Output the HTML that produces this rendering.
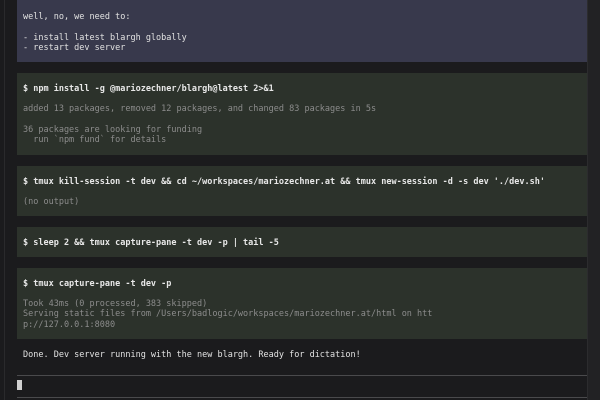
<!DOCTYPE html>
<html><head><style>
html,body{margin:0;padding:0;}
body{width:600px;height:400px;background:#1b1b1d;position:relative;overflow:hidden;font-family:"DejaVu Sans Mono",monospace;font-size:8.5px;color:#e2e2e2;}
.l{position:absolute;left:4px;top:0;width:1px;height:400px;background:#2a2a2c;}
.r{position:absolute;left:587px;top:0;width:13px;height:400px;background:#222224;border-left:1px solid #2c2c2e;}
.b{position:absolute;left:17px;width:570px;}
.u{background:#38394c;}
.g{background:#2c322b;}
.t{position:absolute;left:23px;white-space:pre;line-height:10.3px;}
.bo{font-weight:bold;color:#e8e8e8;}
.m{color:#8c8c8c;}
.hl{position:absolute;left:17px;width:570px;height:1px;background:#4a4a4c;}
</style></head><body>
<div class="l"></div>
<div class="r"></div>
<div class="b u" style="top:0;height:62px"></div>
<div class="b g" style="top:73px;height:82px"></div>
<div class="b g" style="top:166px;height:50px"></div>
<div class="b g" style="top:227px;height:30px"></div>
<div class="b g" style="top:268px;height:71px"></div>
<div class="t" style="top:12px">well, no, we need to:

- install latest blargh globally
- restart dev server</div>
<div class="t bo" style="top:84px">$ npm install -g @mariozechner/blargh@latest 2&gt;&amp;1</div>
<div class="t m" style="top:104px">added 13 packages, removed 12 packages, and changed 83 packages in 5s

36 packages are looking for funding
  run `npm fund` for details</div>
<div class="t bo" style="top:177px">$ tmux kill-session -t dev &amp;&amp; cd ~/workspaces/mariozechner.at &amp;&amp; tmux new-session -d -s dev './dev.sh'</div>
<div class="t m" style="top:197px">(no output)</div>
<div class="t bo" style="top:238px">$ sleep 2 &amp;&amp; tmux capture-pane -t dev -p | tail -5</div>
<div class="t bo" style="top:279px">$ tmux capture-pane -t dev -p</div>
<div class="t m" style="top:299px">Took 43ms (0 processed, 383 skipped)
Serving static files from /Users/badlogic/workspaces/mariozechner.at/html on htt
p://127.0.0.1:8080</div>
<div class="t" style="top:350px">Done. Dev server running with the new blargh. Ready for dictation!</div>
<div class="hl" style="top:375px"></div>
<div style="position:absolute;left:17px;top:380px;width:5px;height:10px;background:#d0d0d0"></div>
<div class="hl" style="top:397px"></div>
</body></html>
